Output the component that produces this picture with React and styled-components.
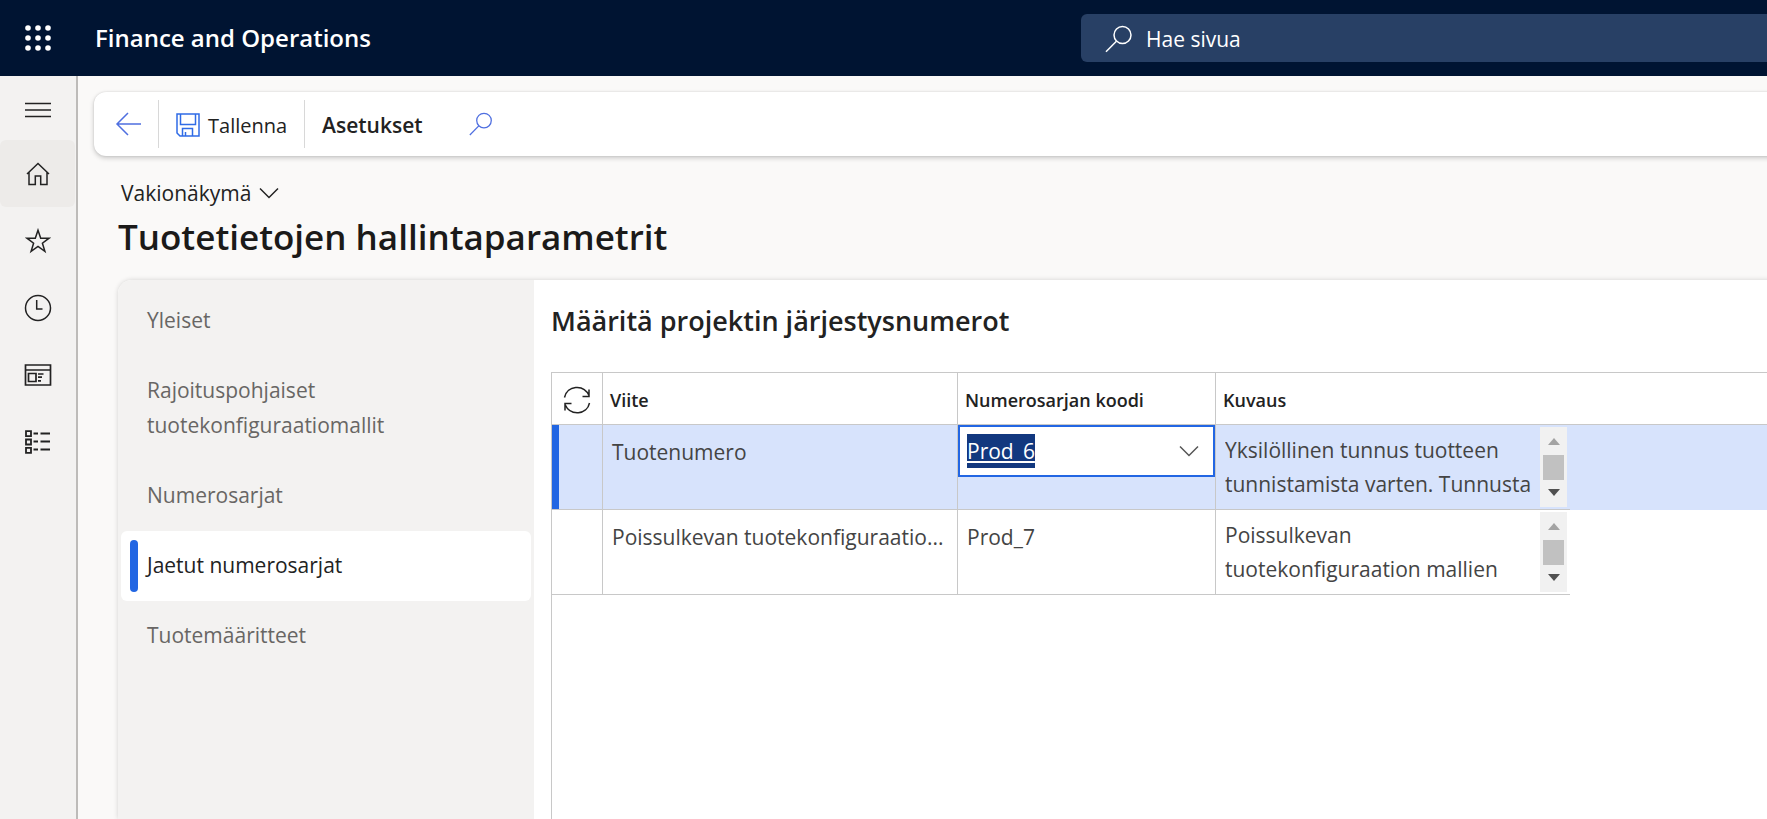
import { useEffect, useRef, useState } from "react";
import styled, { createGlobalStyle } from "styled-components";

const navItems = [
  "Yleiset",
  "Rajoituspohjaiset tuotekonfiguraatiomallit",
  "Numerosarjat",
  "Jaetut numerosarjat",
  "Tuotemääritteet",
];

const rows = [
  {
    id: 1,
    name: "Tuotenumero",
    code: "Prod_6",
    text: "Yksilöllinen tunnus tuotteen\ntunnistamista varten. Tunnusta",
  },
  {
    id: 2,
    name: "Poissulkevan tuotekonfiguraatio...",
    code: "Prod_7",
    text: "Poissulkevan\ntuotekonfiguraation mallien",
  },
];

const SearchIcon = ({ size }) => (
  <Icon width={size} height={size} viewBox="0 0 28 28">
    <circle cx="17.5" cy="10" r="8.5" />
    <path d="M11.4 16.2 L1 26.8" />
  </Icon>
);

const Chevron = () => (
  <Icon width="20" height="12" viewBox="0 0 20 12">
    <path d="M1 1.5 L10 10.5 L19 1.5" />
  </Icon>
);

const SideIcons = () => (
  <>
    <SideButton aria-label="Valikko" $first>
      <Icon width="28" height="18" viewBox="0 0 28 18" strokeWidth="1.7">
        <path d="M1 2.5H27M1 9H27M1 15.5H27" />
      </Icon>
    </SideButton>
    <SideButton aria-label="Etusivu" $active>
      <Icon width="24" height="24" viewBox="0 0 24 24">
        <path d="M1 12 L12 1.5 L23 12 M3 10.5 V22.5 H9.3 V14 H14.7 V22.5 H21 V10.5" />
      </Icon>
    </SideButton>
    <SideButton aria-label="Suosikit">
      <Icon width="26" height="26" viewBox="0 0 26 26">
        <path d="M13 2.2 L15.7 10.2 H24 L17.4 15.2 L19.9 23.4 L13 18.4 L6.1 23.4 L8.6 15.2 L2 10.2 H10.3 Z" />
      </Icon>
    </SideButton>
    <SideButton aria-label="Viimeisimmät">
      <Icon width="28" height="28" viewBox="0 0 28 28">
        <circle cx="14" cy="14" r="12.5" />
        <path d="M12.7 6V15H18.5" />
      </Icon>
    </SideButton>
    <SideButton aria-label="Työtilat">
      <Icon width="28" height="22" viewBox="0 0 28 22" strokeWidth="1.7">
        <path d="M1.5 1H26.5V21H1.5Z M1.5 6H26.5 M4.5 9.5H12V17.5H4.5Z" />
        <path d="M14 10H19.5M14 13.2H18M14 16.8H17" />
      </Icon>
    </SideButton>
    <SideButton aria-label="Moduulit">
      <Icon width="28" height="24" viewBox="0 0 28 24" strokeWidth="1.8">
        <path d="M2 1.2H7V6.2H2Z M2 9.5H7V14.5H2Z M2 17.8H7V22.8H2Z" />
        <path d="M9.5 3.5H14M16.5 3.5H26M9.5 11.5H14M16.5 11.5H26M9.5 19.5H14M16.5 19.5H26" />
      </Icon>
    </SideButton>
  </>
);

const Description = ({ label, value }) => (
  <DescriptionBox>
    <Textarea aria-label={label} readOnly rows={2} value={value} />
    <ScrollTrack>
      <ScrollArrow $up />
      <ScrollThumb />
      <ScrollArrow />
    </ScrollTrack>
  </DescriptionBox>
);

const App = () => {
  const codeInput = useRef();
  const [active, setActive] = useState("Jaetut numerosarjat");
  const [code, setCode] = useState(rows[0].code);

  useEffect(() => {
    codeInput.current.focus();
    codeInput.current.select();
  }, []);

  return (
    <Page>
      <GlobalStyle />
      <Header>
        <WaffleButton aria-label="Sovellukset">
          <svg width="28" height="28" viewBox="0 0 28 28" fill="#fff">
            {[4, 14, 24].map((y) =>
              [4, 14, 24].map((x) => (
                <circle key={`${x}-${y}`} cx={x} cy={y} r="2.8" />
              ))
            )}
          </svg>
        </WaffleButton>
        <Brand>Finance and Operations</Brand>
        <SearchBox>
          <SearchIcon size={28} />
          <SearchInput aria-label="Hae sivua" placeholder="Hae sivua" />
        </SearchBox>
      </Header>
      <Body>
        <Sidebar>
          <SideIcons />
        </Sidebar>
        <Main>
          <Toolbar>
            <BackButton aria-label="Takaisin">
              <Icon width="27" height="24" viewBox="0 0 27 24">
                <path d="M13 1L2 12L13 23M2 12H26" />
              </Icon>
            </BackButton>
            <Divider />
            <ToolButton>
              <Icon width="24" height="24" viewBox="0 0 24 24">
                <path d="M1 1H23V23H4L1 20Z M4.5 1V11.5H19.5V1 M6.5 23V15.5H16.5V23 M9.5 23V19" />
              </Icon>
              Tallenna
            </ToolButton>
            <Divider />
            <ToolButton $bold>Asetukset</ToolButton>
            <FindButton aria-label="Etsi">
              <SearchIcon size={24} />
            </FindButton>
          </Toolbar>
          <Content>
            <ViewButton>
              Vakionäkymä
              <Chevron />
            </ViewButton>
            <Title>Tuotetietojen hallintaparametrit</Title>
            <Panel>
              <Nav>
                {navItems.map((it) => (
                  <NavButton
                    key={it}
                    $active={it === active}
                    onClick={() => setActive(it)}
                  >
                    {it}
                  </NavButton>
                ))}
              </Nav>
              <Section>
                <Heading>Määritä projektin järjestysnumerot</Heading>
                <Grid>
                  <Table>
                    <colgroup>
                      <Col $w={51} />
                      <Col $w={355} />
                      <Col $w={258} />
                      <Col $w={354} />
                      <col />
                    </colgroup>
                    <thead>
                      <tr>
                        <Th $center>
                          <RefreshButton aria-label="Päivitä">
                            <Icon width="28" height="28" viewBox="0 0 28 28">
                              <path d="M1.5 11.5 C4 -0.5 20.5 -2.5 26 9.5 M26 3.5V10.5H19.5" />
                              <path d="M26.5 17 C24 29 7.5 30.5 2 18.5 M2 24.5V17.5H8.5" />
                            </Icon>
                          </RefreshButton>
                        </Th>
                        <Th>Viite</Th>
                        <Th>Numerosarjan koodi</Th>
                        <Th $last>Kuvaus</Th>
                        <Th $last as="td" />
                      </tr>
                    </thead>
                    <tbody>
                      {rows.map((row, i) => (
                        <Row key={row.id} $selected={i === 0}>
                          <MarkTd $selected={i === 0} />
                          <Td>
                            <CellText>{row.name}</CellText>
                          </Td>
                          <Td>
                            {i === 0 ? (
                              <Combo>
                                <CodeInput
                                  ref={codeInput}
                                  aria-label="Numerosarjan koodi"
                                  spellCheck={false}
                                  value={code}
                                  onChange={(e) => setCode(e.target.value)}
                                />
                                <ComboButton aria-label="Avaa">
                                  <Chevron />
                                </ComboButton>
                              </Combo>
                            ) : (
                              <CellText>{row.code}</CellText>
                            )}
                          </Td>
                          <Td $last>
                            <Description label={row.name} value={row.text} />
                          </Td>
                          <FillTd />
                        </Row>
                      ))}
                    </tbody>
                  </Table>
                </Grid>
              </Section>
            </Panel>
          </Content>
        </Main>
      </Body>
    </Page>
  );
};

export default App;

const GlobalStyle = createGlobalStyle`
  * {
    box-sizing: border-box;
  }
  body {
    margin: 0;
    background: #faf9f8;
    color: #222;
    font-family: "Open Sans", "Noto Sans", sans-serif;
    font-size: 21px;
    overflow-x: hidden;
  }
  button, input, textarea {
    font: inherit;
    color: inherit;
    border: 0;
    padding: 0;
    background: none;
    outline: none;
  }
  button {
    cursor: pointer;
  }
`;

const Icon = styled.svg`
  flex: none;
  display: block;
  fill: none;
  stroke: currentColor;
  stroke-width: ${(p) => p.strokeWidth || 1.5};
`;

const Page = styled.div`
  display: flex;
  flex-direction: column;
  min-height: 100vh;
`;

const Header = styled.header`
  display: flex;
  align-items: center;
  height: 76px;
  background: #001432;
  color: #fff;
`;

const WaffleButton = styled.button`
  display: flex;
  justify-content: center;
  width: 75px;
`;

const Brand = styled.div`
  flex: 1;
  padding: 0 0 2px 20px;
  font-size: 24px;
  font-weight: 600;
`;

const SearchBox = styled.label`
  display: flex;
  align-items: center;
  gap: 13px;
  width: 686px;
  height: 48px;
  padding: 2px 0 0 24px;
  background: #284065;
  border-radius: 6px 0 0 6px;
`;

const SearchInput = styled.input`
  flex: 1;
  min-width: 0;
  &::placeholder {
    color: #fff;
    opacity: 1;
  }
`;

const Body = styled.div`
  display: flex;
  flex: 1;
`;

const Sidebar = styled.nav`
  flex: none;
  width: 78px;
  background: #f3f2f1;
  border-right: 2px solid #bdbbb9;
`;

const SideButton = styled.button`
  display: flex;
  align-items: center;
  justify-content: center;
  width: 75px;
  height: ${(p) => (p.$first ? 64 : 67)}px;
  padding-top: ${(p) => (p.$first ? 4 : 0)}px;
  border-radius: 6px;
  background: ${(p) => (p.$active ? "#edebe9" : "none")};
`;

const Main = styled.main`
  flex: 1;
  min-width: 0;
  display: flex;
  flex-direction: column;
  padding: 16px 0 0 16px;
`;

const Toolbar = styled.div`
  display: flex;
  align-items: center;
  height: 64px;
  margin-right: -8px;
  background: #fff;
  border-radius: 12px 0 0 12px;
  box-shadow: 0 2px 5px rgba(0, 0, 0, 0.2), 0 0 2px rgba(0, 0, 0, 0.12);
`;

const BackButton = styled.button`
  display: flex;
  justify-content: center;
  width: 64px;
  padding-left: 4px;
  color: #4f6fe0;
`;

const Divider = styled.div`
  width: 1px;
  height: 48px;
  background: #d8d8d8;
`;

const ToolButton = styled.button`
  display: flex;
  align-items: center;
  gap: 8px;
  padding: 2px 17px 0;
  font-size: ${(p) => (p.$bold ? 21 : 20)}px;
  font-weight: ${(p) => (p.$bold ? 600 : 400)};
  svg {
    color: #2f6be6;
  }
`;

const FindButton = styled.button`
  padding: 0 29px;
  color: #4f6fe0;
`;

const Content = styled.div`
  flex: 1;
  display: flex;
  flex-direction: column;
  padding: 20px 0 0 24px;
`;

const ViewButton = styled.button`
  display: flex;
  align-items: center;
  align-self: flex-start;
  gap: 8px;
  height: 34px;
  padding-left: 3px;
`;

const Title = styled.h1`
  margin: 2px 0 18px;
  font-size: 35px;
  line-height: 50px;
  font-weight: 600;
  color: #1b1a19;
`;

const Panel = styled.div`
  flex: 1;
  display: flex;
  margin-right: -8px;
  background: #fff;
  border-radius: 14px 0 0 0;
  box-shadow: 0 0 5px rgba(0, 0, 0, 0.16);
`;

const Nav = styled.nav`
  flex: none;
  display: flex;
  flex-direction: column;
  width: 416px;
  padding: 6px 3px;
  background: #f3f2f1;
  border-radius: 14px 0 0 0;
`;

const NavButton = styled.button`
  position: relative;
  padding: 17px 120px 18px 26px;
  line-height: 35px;
  text-align: left;
  border-radius: 6px;
  color: ${(p) => (p.$active ? "#222" : "#686664")};
  background: ${(p) => (p.$active ? "#fff" : "none")};
  &::before {
    content: "";
    display: ${(p) => (p.$active ? "block" : "none")};
    position: absolute;
    left: 9px;
    top: 9px;
    bottom: 9px;
    width: 8px;
    border-radius: 4px;
    background: #2266e3;
  }
`;

const Section = styled.section`
  flex: 1;
  min-width: 0;
  display: flex;
  flex-direction: column;
  padding: 21px 0 0 17px;
`;

const Heading = styled.h2`
  margin: 0 0 31px;
  font-size: 27px;
  line-height: 40px;
  font-weight: 600;
`;

const Grid = styled.div`
  flex: 1;
  border-left: 1px solid #c8c8c8;
  border-top: 1px solid #c8c8c8;
`;

const Table = styled.table`
  width: 100%;
  table-layout: fixed;
  border-collapse: separate;
  border-spacing: 0;
`;

const Col = styled.col`
  width: ${(p) => p.$w}px;
`;

const Th = styled.th`
  height: 52px;
  padding: 3px 0 0 ${(p) => (p.$center ? 0 : 7)}px;
  font-size: 18px;
  font-weight: 600;
  text-align: left;
  border-bottom: 1px solid #c8c8c8;
  border-right: ${(p) => (p.$last ? 0 : 1)}px solid #c8c8c8;
`;

const RefreshButton = styled.button`
  display: flex;
  margin: 0 auto;
`;

const Row = styled.tr`
  background: ${(p) => (p.$selected ? "#d7e3fc" : "#fff")};
`;

const Td = styled.td`
  height: 85px;
  padding: 0;
  vertical-align: top;
  color: #444;
  border-bottom: 1px solid #c8c8c8;
  border-right: ${(p) => (p.$last ? 0 : 1)}px solid #c8c8c8;
`;

const MarkTd = styled(Td)`
  box-shadow: ${(p) => (p.$selected ? "inset 7px 0 #2266e3" : "none")};
`;

const FillTd = styled.td`
  padding: 0;
`;

const CellText = styled.div`
  padding: 10px 4px 0 9px;
  line-height: 34px;
  white-space: nowrap;
  overflow: hidden;
`;

const Combo = styled.div`
  display: flex;
  align-items: center;
  height: 52px;
  padding: 0 14px 0 7px;
  background: #fff;
  border: 2px solid #2266e3;
`;

const CodeInput = styled.input`
  flex: 1;
  min-width: 0;
  line-height: 34px;
  color: #1f57c3;
  text-decoration: underline;
  &::selection {
    color: #fff;
    background: #12387f;
  }
`;

const ComboButton = styled.button`
  color: #555;
`;

const DescriptionBox = styled.div`
  display: flex;
  justify-content: space-between;
  height: 84px;
  padding: 2px 3px 2px 9px;
`;

const Textarea = styled.textarea`
  flex: 1;
  min-width: 0;
  height: 76px;
  padding-top: 6px;
  line-height: 34px;
  resize: none;
  overflow: hidden;
  white-space: pre;
`;

const ScrollTrack = styled.div`
  display: flex;
  flex-direction: column;
  align-items: center;
  justify-content: space-between;
  width: 27px;
  padding: 11px 0;
  background: #f1f1f1;
`;

const ScrollThumb = styled.div`
  width: 21px;
  height: 25px;
  background: #c1c1c1;
`;

const ScrollArrow = styled.div`
  border: 6px solid transparent;
  border-top: ${(p) => (p.$up ? "0" : "7px solid #505050")};
  border-bottom: ${(p) => (p.$up ? "7px solid #a3a3a3" : "0")};
`;
